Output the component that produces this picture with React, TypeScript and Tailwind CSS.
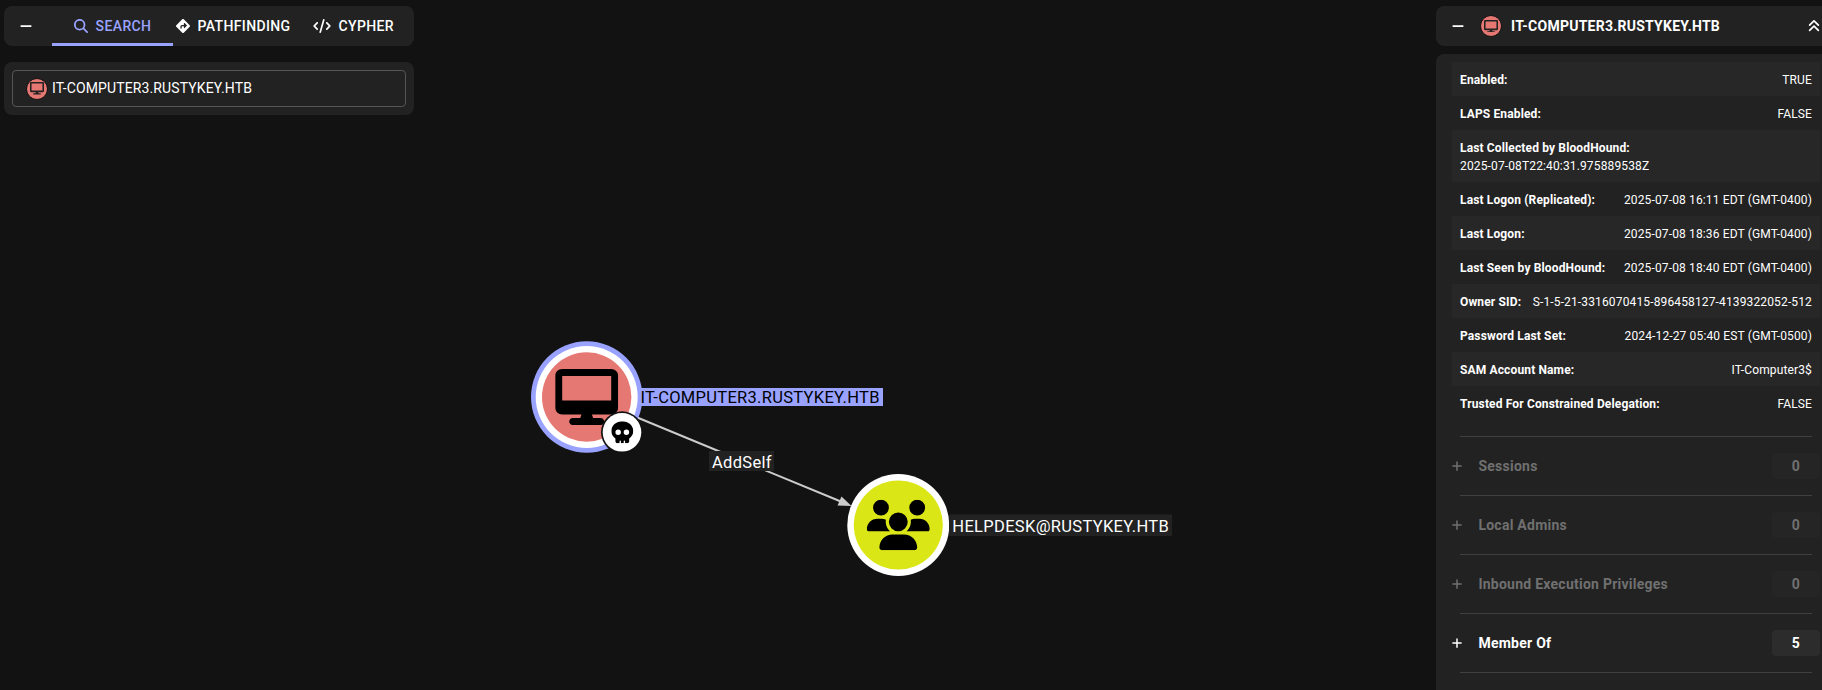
import React from 'react';
import { FaDesktop as FaMonitor } from 'react-icons/fa';
import {
  FaAnglesUp,
  FaCode,
  FaDesktop,
  FaDiamondTurnRight,
  FaMagnifyingGlass,
  FaMinus,
  FaPlus,
  FaSkull,
  FaUsers,
} from 'react-icons/fa6';

const properties = [
  { label: 'Enabled:', value: 'TRUE' },
  { label: 'LAPS Enabled:', value: 'FALSE' },
  { label: 'Last Collected by BloodHound:', value: '2025-07-08T22:40:31.975889538Z', stacked: true },
  { label: 'Last Logon (Replicated):', value: '2025-07-08 16:11 EDT (GMT-0400)' },
  { label: 'Last Logon:', value: '2025-07-08 18:36 EDT (GMT-0400)' },
  { label: 'Last Seen by BloodHound:', value: '2025-07-08 18:40 EDT (GMT-0400)' },
  { label: 'Owner SID:', value: 'S-1-5-21-3316070415-896458127-4139322052-512' },
  { label: 'Password Last Set:', value: '2024-12-27 05:40 EST (GMT-0500)' },
  { label: 'SAM Account Name:', value: 'IT-Computer3$' },
  { label: 'Trusted For Constrained Delegation:', value: 'FALSE' },
];

const sections = [
  { label: 'Sessions', count: 0 },
  { label: 'Local Admins', count: 0 },
  { label: 'Inbound Execution Privileges', count: 0 },
  { label: 'Member Of', count: 5 },
];

function ComputerBadge() {
  return (
    <span className="flex size-[22px] shrink-0 items-center justify-center rounded-full border border-[#111111] bg-[#e67873] text-[#222222]">
      <FaMonitor className="h-[12.5px] w-3.5" />
    </span>
  );
}

function Graph() {
  return (
    <svg className="absolute inset-0" width="1822" height="690" viewBox="0 0 1822 690">
      <line x1="630" y1="414.5" x2="842" y2="502" stroke="#cccccc" strokeWidth="2" />
      <path d="M851.5 506L837.5 505.5L841.5 496.5Z" fill="#cccccc" />

      <circle cx="586.7" cy="397" r="55.7" fill="#99a3ff" />
      <circle cx="586.7" cy="397" r="51" fill="#ffffff" />
      <circle cx="586.7" cy="397" r="44.7" fill="#e67873" />
      <FaDesktop x="555.2" y="369" className="h-[56px] w-[63px]" color="#000000" />
      <circle cx="622" cy="432.3" r="21" fill="#121212" />
      <circle cx="622" cy="432.3" r="19.3" fill="#ffffff" />
      <FaSkull x="611.3" y="421.3" className="size-[22px]" color="#000000" />

      <circle cx="898.3" cy="525" r="51" fill="#ffffff" />
      <circle cx="898.3" cy="525" r="44.6" fill="#dbe617" />
      <FaUsers x="866.8" y="499.8" className="h-[50.4px] w-[63px]" color="#000000" />

      <g fontFamily="Roboto, sans-serif" fontSize="16.5">
        <rect x="641" y="388" width="242" height="18" fill="#99a3ff" />
        <text x="640.5" y="403" textLength="239" fill="#000000">IT-COMPUTER3.RUSTYKEY.HTB</text>
        <rect x="709" y="451" width="65" height="20" fill="#222222" />
        <text x="712" y="468" textLength="59.5" fill="#ffffff">AddSelf</text>
        <rect x="949" y="514.5" width="223" height="21.5" fill="#222222" />
        <text x="952.3" y="532" textLength="216.5" fill="#ffffff">HELPDESK@RUSTYKEY.HTB</text>
      </g>
    </svg>
  );
}

function SearchPanel() {
  return (
    <div className="relative flex w-[410px] flex-col gap-4">
      <div className="flex h-10 items-stretch rounded-lg bg-[#222222] text-sm font-medium tracking-[0.37px] text-white">
        <button className="flex w-12 items-center justify-center pr-1">
          <FaMinus className="size-3.5" />
        </button>
        <button className="flex w-[121px] items-center justify-center gap-2 border-b-3 border-[#99a3ff] pt-[3px] text-[#99a3ff]">
          <FaMagnifyingGlass className="size-3.5" />
          SEARCH
        </button>
        <button className="ml-[3px] flex items-center gap-[7.5px]">
          <FaDiamondTurnRight className="size-3.5" />
          PATHFINDING
        </button>
        <button className="ml-[22px] flex items-center gap-2">
          <FaCode className="h-3.5 w-[18px]" />
          CYPHER
        </button>
      </div>
      <div className="h-[53px] rounded-lg bg-[#222222] p-2">
        <div className="flex h-[37px] w-[394px] items-center gap-1 rounded border border-[#555555] pl-[13px] text-sm tracking-[0.13px] text-white">
          <ComputerBadge />
          <span className="pb-0.5">IT-COMPUTER3.RUSTYKEY.HTB</span>
        </div>
      </div>
    </div>
  );
}

function EntityPanel() {
  return (
    <div className="relative flex w-[400px] shrink-0 flex-col gap-2 text-white">
      <div className="flex h-10 shrink-0 items-center rounded-lg bg-[#222222] pl-[15px] pr-[15px]">
        <FaMinus className="size-3.5" />
        <span className="ml-[15px] flex">
          <ComputerBadge />
        </span>
        <span className="ml-[9px] text-sm font-bold tracking-[0.25px]">IT-COMPUTER3.RUSTYKEY.HTB</span>
        <FaAnglesUp className="ml-auto size-3.5" />
      </div>
      <div className="h-[700px] shrink-0 rounded-lg bg-[#222222] px-4 pt-2">
        <div className="text-xs leading-[18px] tracking-[0.14px]">
          {properties.map((p) => (
            <div
              key={p.label}
              className={
                p.stacked
                  ? 'px-2 pt-[9px] pb-[7px] odd:bg-[#272727]'
                  : 'flex justify-between px-2 pt-[9px] pb-[7px] odd:bg-[#272727] even:bg-[#222222]'
              }
            >
              <div className="font-bold">{p.label}</div>
              <div>{p.value}</div>
            </div>
          ))}
        </div>
        <div className="mx-2 mt-4 h-px bg-[#404040]" />
        {sections.map((s) => (
          <div key={s.label}>
            <div
              className={
                s.count
                  ? 'flex h-[58px] items-center text-sm font-bold tracking-[0.25px]'
                  : 'flex h-[58px] items-center text-sm font-bold tracking-[0.25px] text-[#707070]'
              }
            >
              <FaPlus className="-ml-px size-3" />
              <span className="ml-[15.4px]">{s.label}</span>
              <span
                className={
                  s.count
                    ? 'ml-auto flex h-[26px] w-12 items-center justify-center rounded bg-[#2c2c2c]'
                    : 'ml-auto flex h-[26px] w-12 items-center justify-center rounded bg-[#252525]'
                }
              >
                {s.count}
              </span>
            </div>
            <div className="mx-2 h-px bg-[#404040]" />
          </div>
        ))}
      </div>
    </div>
  );
}

export default function App() {
  return (
    <div className="relative flex h-[690px] w-[1822px] items-start overflow-hidden bg-[#121212] pl-1 pt-1.5 font-['Roboto',sans-serif]">
      <Graph />
      <SearchPanel />
      <div className="w-[1022px] shrink-0" />
      <EntityPanel />
    </div>
  );
}
